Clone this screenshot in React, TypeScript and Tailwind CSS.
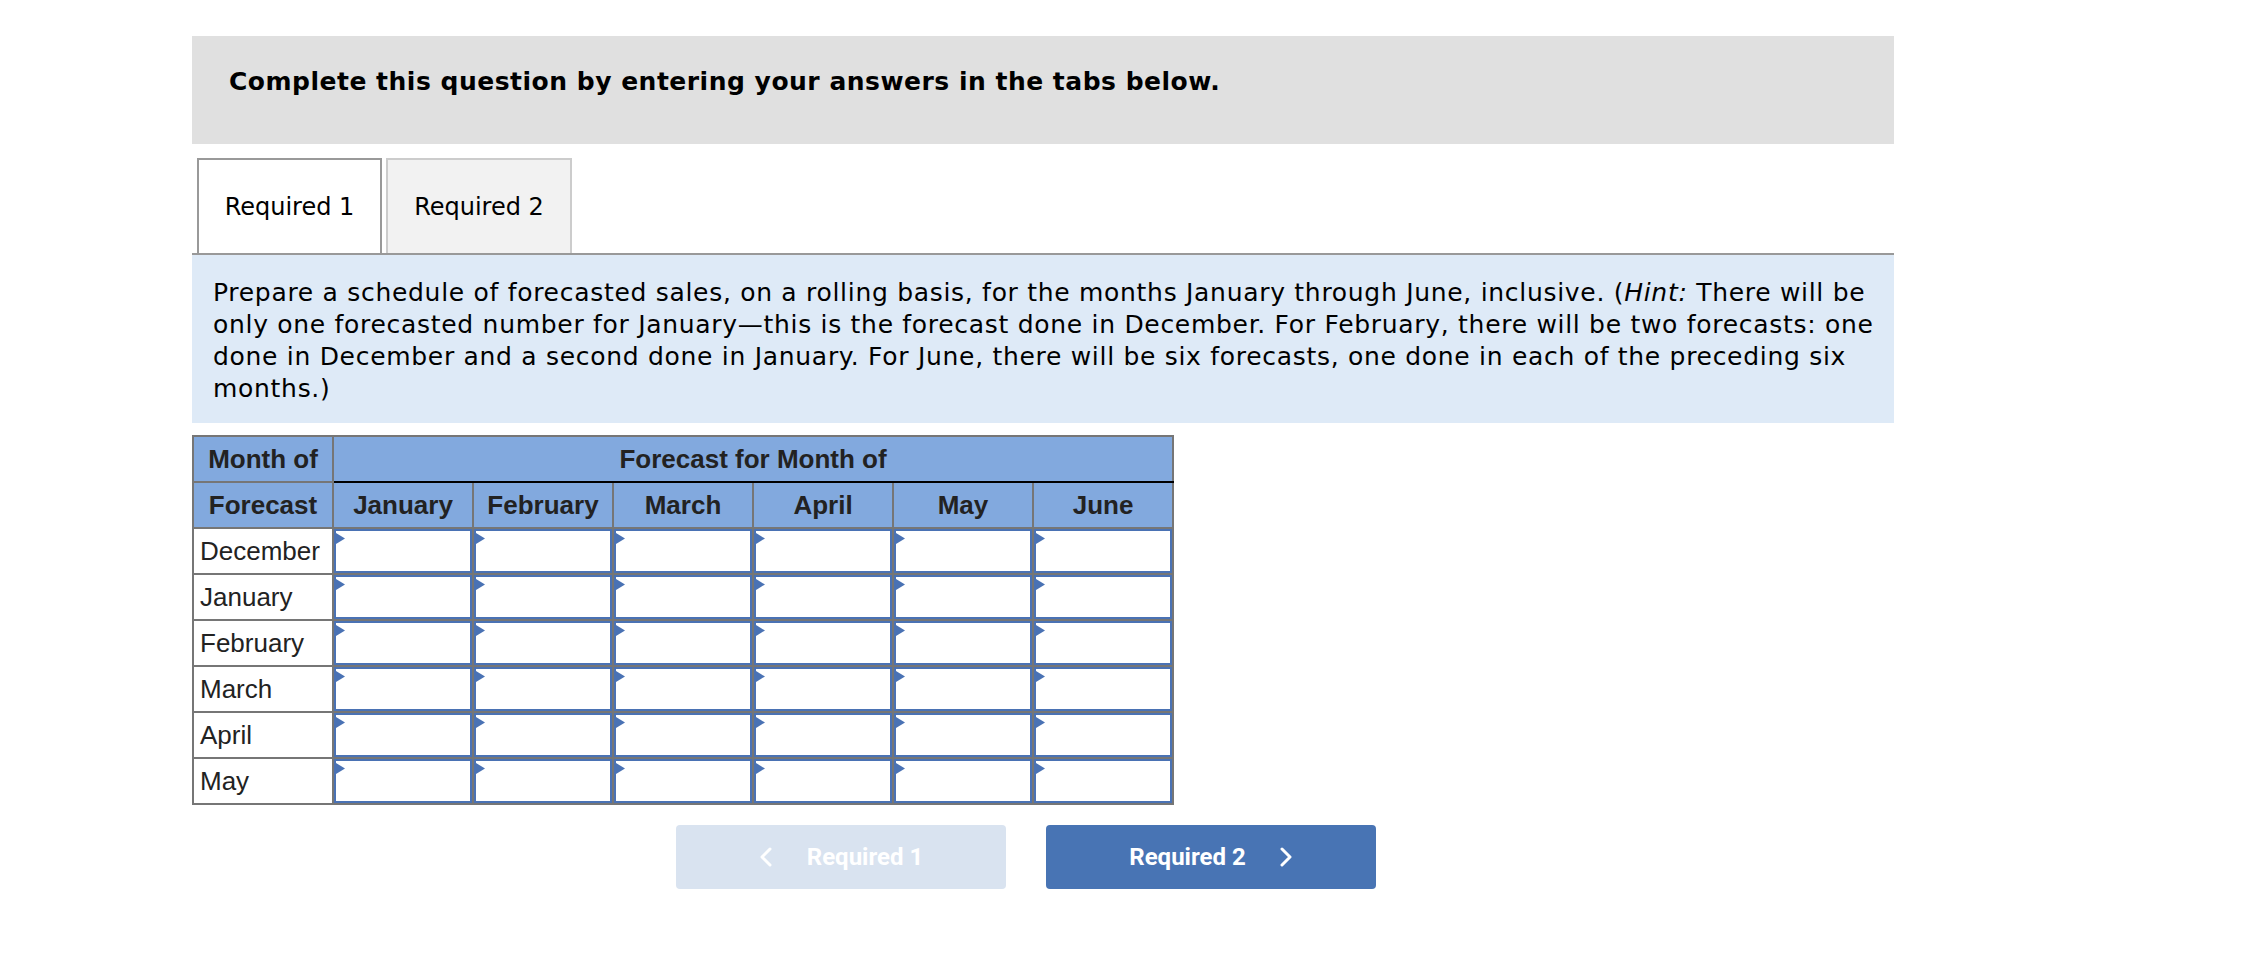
import React from "react";

const months = ["January", "February", "March", "April", "May", "June"];
const rows = ["December", "January", "February", "March", "April", "May"];

function Chevron({ dir }: { dir: "left" | "right" }) {
  return (
    <svg width="14" height="20" viewBox="0 0 14 20" className="shrink-0">
      <polyline
        points={dir === "left" ? "11,2 3,10 11,18" : "3,2 11,10 3,18"}
        fill="none"
        stroke="white"
        strokeWidth="3"
        strokeLinecap="round"
        strokeLinejoin="round"
      />
    </svg>
  );
}

function InputCell() {
  return (
    <td className="border-2 border-[#767676] p-0 h-[46px]">
      <div className="relative h-[44px] w-full box-border border-2 border-[#4a72b4] bg-white">
        <svg width="9" height="11" viewBox="0 0 9 11" className="absolute left-0 top-[2px]">
          <polygon points="0,0 9,5.5 0,11" fill="#4a72b4" />
        </svg>
      </div>
    </td>
  );
}

export default function App() {
  return (
    <div className="min-h-[972px] w-full bg-white pt-[36px]">
      <div className="ml-[192px] w-[1702px]">
        {/* header */}
        <div className="h-[108px] bg-[#e0e0e0] pl-[37px] pt-[30px] font-['DejaVu_Sans',Verdana,sans-serif] text-[25px] leading-[32px] font-bold tracking-[0.5px] text-black">
          Complete this question by entering your answers in the tabs below.
        </div>

        {/* tabs */}
        <div className="mt-[14px] flex gap-[4px] pl-[5px] border-b-2 border-[#999999] font-['DejaVu_Sans',Verdana,sans-serif] text-[24px] text-black">
          <div className="flex h-[95px] w-[185px] items-center justify-center border-2 border-b-0 border-[#999999] bg-white">
            Required 1
          </div>
          <div className="flex h-[95px] w-[186px] items-center justify-center border-2 border-b-0 border-[#cccccc] bg-[#f2f2f2]">
            Required 2
          </div>
        </div>

        {/* instructions */}
        <div className="bg-[#deeaf7] pl-[21px] pt-[22px] pb-[18px] font-['DejaVu_Sans',Verdana,sans-serif] text-[25px] leading-[32px] tracking-[0.7px] text-black">
          <div className="whitespace-nowrap">
            Prepare a schedule of forecasted sales, on a rolling basis, for the months January through June, inclusive. (<i>Hint:</i> There will be
          </div>
          <div className="whitespace-nowrap">
            only one forecasted number for January—this is the forecast done in December. For February, there will be two forecasts: one
          </div>
          <div className="whitespace-nowrap">
            done in December and a second done in January. For June, there will be six forecasts, one done in each of the preceding six
          </div>
          <div className="whitespace-nowrap">months.)</div>
        </div>

        {/* table */}
        <table className="mt-[12px] table-fixed border-collapse border-2 border-[#767676] w-[982px] font-['Liberation_Sans',Arial,sans-serif] text-[26px] text-[#222222]">
          <colgroup>
            <col className="w-[140px]" />
            {months.map((m) => (
              <col key={m} className="w-[140px]" />
            ))}
          </colgroup>
          <thead>
            <tr className="h-[46px]">
              <th className="border-2 border-[#767676] bg-[#82a9de] p-0 font-bold">Month of</th>
              <th colSpan={6} className="border-2 border-[#767676] border-b-black bg-[#82a9de] p-0 font-bold">
                Forecast for Month of
              </th>
            </tr>
            <tr className="h-[46px]">
              <th className="border-2 border-[#767676] bg-[#82a9de] p-0 font-bold">Forecast</th>
              {months.map((m) => (
                <th key={m} className="border-2 border-[#767676] bg-[#82a9de] p-0 font-bold">
                  {m}
                </th>
              ))}
            </tr>
          </thead>
          <tbody>
            {rows.map((r) => (
              <tr key={r} className="h-[46px]">
                <td className="border-2 border-[#767676] bg-white pl-[6px] text-left whitespace-nowrap">{r}</td>
                {months.map((m) => (
                  <InputCell key={m} />
                ))}
              </tr>
            ))}
          </tbody>
        </table>

        {/* buttons */}
        <div className="mt-[20px] ml-[484px] flex gap-[40px] font-['Roboto',sans-serif] text-[24px] font-bold text-white">
          <div className="flex h-[64px] w-[330px] items-center justify-center gap-[34px] rounded-[4px] bg-[#d9e3f0]">
            <Chevron dir="left" />
            <span>Required 1</span>
          </div>
          <div className="flex h-[64px] w-[330px] items-center justify-center gap-[33px] rounded-[4px] bg-[#4874b4]">
            <span>Required 2</span>
            <Chevron dir="right" />
          </div>
        </div>
      </div>
    </div>
  );
}
